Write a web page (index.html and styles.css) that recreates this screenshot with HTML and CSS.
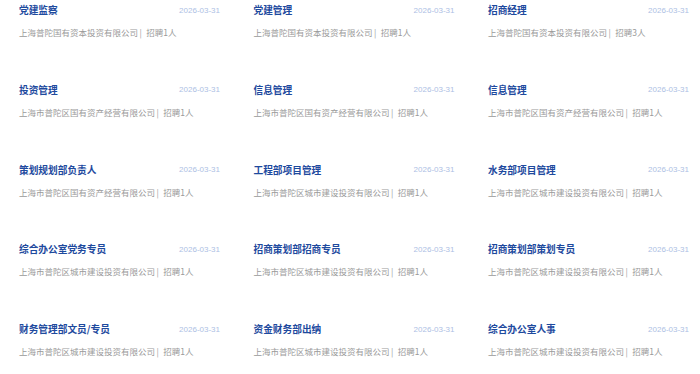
FILE: index.html
```html
<!DOCTYPE html>
<html lang="zh-CN">
<head>
    <meta charset="utf-8">
    <title>招聘信息</title>
    <link rel="stylesheet" href="styles.css">
</head>
<body>

<ul class="job-list">
    <li class="job">
        <div class="job-head"><span class="job-title">党建监察</span><span class="job-date">2026-03-31</span></div>
        <div class="job-info">上海普陀国有资本投资有限公司<span class="sep">|</span>招聘1人</div>
    </li>
    <li class="job">
        <div class="job-head"><span class="job-title">党建管理</span><span class="job-date">2026-03-31</span></div>
        <div class="job-info">上海普陀国有资本投资有限公司<span class="sep">|</span>招聘1人</div>
    </li>
    <li class="job">
        <div class="job-head"><span class="job-title">招商经理</span><span class="job-date">2026-03-31</span></div>
        <div class="job-info">上海普陀国有资本投资有限公司<span class="sep">|</span>招聘3人</div>
    </li>
    <li class="job">
        <div class="job-head"><span class="job-title">投资管理</span><span class="job-date">2026-03-31</span></div>
        <div class="job-info">上海市普陀区国有资产经营有限公司<span class="sep">|</span>招聘1人</div>
    </li>
    <li class="job">
        <div class="job-head"><span class="job-title">信息管理</span><span class="job-date">2026-03-31</span></div>
        <div class="job-info">上海市普陀区国有资产经营有限公司<span class="sep">|</span>招聘1人</div>
    </li>
    <li class="job">
        <div class="job-head"><span class="job-title">信息管理</span><span class="job-date">2026-03-31</span></div>
        <div class="job-info">上海市普陀区国有资产经营有限公司<span class="sep">|</span>招聘1人</div>
    </li>
    <li class="job">
        <div class="job-head"><span class="job-title">策划规划部负责人</span><span class="job-date">2026-03-31</span></div>
        <div class="job-info">上海市普陀区国有资产经营有限公司<span class="sep">|</span>招聘1人</div>
    </li>
    <li class="job">
        <div class="job-head"><span class="job-title">工程部项目管理</span><span class="job-date">2026-03-31</span></div>
        <div class="job-info">上海市普陀区城市建设投资有限公司<span class="sep">|</span>招聘1人</div>
    </li>
    <li class="job">
        <div class="job-head"><span class="job-title">水务部项目管理</span><span class="job-date">2026-03-31</span></div>
        <div class="job-info">上海市普陀区城市建设投资有限公司<span class="sep">|</span>招聘1人</div>
    </li>
    <li class="job">
        <div class="job-head"><span class="job-title">综合办公室党务专员</span><span class="job-date">2026-03-31</span></div>
        <div class="job-info">上海市普陀区城市建设投资有限公司<span class="sep">|</span>招聘1人</div>
    </li>
    <li class="job">
        <div class="job-head"><span class="job-title">招商策划部招商专员</span><span class="job-date">2026-03-31</span></div>
        <div class="job-info">上海市普陀区城市建设投资有限公司<span class="sep">|</span>招聘1人</div>
    </li>
    <li class="job">
        <div class="job-head"><span class="job-title">招商策划部策划专员</span><span class="job-date">2026-03-31</span></div>
        <div class="job-info">上海市普陀区城市建设投资有限公司<span class="sep">|</span>招聘1人</div>
    </li>
    <li class="job">
        <div class="job-head"><span class="job-title">财务管理部文员/专员</span><span class="job-date">2026-03-31</span></div>
        <div class="job-info">上海市普陀区城市建设投资有限公司<span class="sep">|</span>招聘1人</div>
    </li>
    <li class="job">
        <div class="job-head"><span class="job-title">资金财务部出纳</span><span class="job-date">2026-03-31</span></div>
        <div class="job-info">上海市普陀区城市建设投资有限公司<span class="sep">|</span>招聘1人</div>
    </li>
    <li class="job">
        <div class="job-head"><span class="job-title">综合办公室人事</span><span class="job-date">2026-03-31</span></div>
        <div class="job-info">上海市普陀区城市建设投资有限公司<span class="sep">|</span>招聘1人</div>
    </li>
</ul>

</body>
</html>
```

FILE: styles.css
```css
html {
    overflow: hidden;
}
body {
    margin: 0;
    padding: 0;
    background: #fff;
    font-family: "Noto Sans CJK SC", "Noto Sans", sans-serif;
    height: 374px;
    overflow: hidden;
}
.job-list {
    list-style: none;
    margin: 0;
    padding: 0 10px 0 19px;
    display: grid;
    grid-template-columns: repeat(3, 201px);
    column-gap: 33.5px;
    grid-auto-rows: 79.75px;
}
.job-head {
    display: flex;
    justify-content: space-between;
    align-items: center;
    height: 20px;
}
.job-title {
    font-size: 9.7px;
    font-weight: bold;
    color: #1e4a9e;
}
.job-date {
    font-family: "Liberation Sans", Arial, sans-serif;
    font-size: 8px;
    color: #adc0e4;
}
.job-info {
    margin-top: 5px;
    line-height: 14px;
    font-size: 8.5px;
    color: #9a9a9a;
    white-space: nowrap;
}
.job-info .sep {
    margin: 0 4.5px 0 1.5px;
}
```
